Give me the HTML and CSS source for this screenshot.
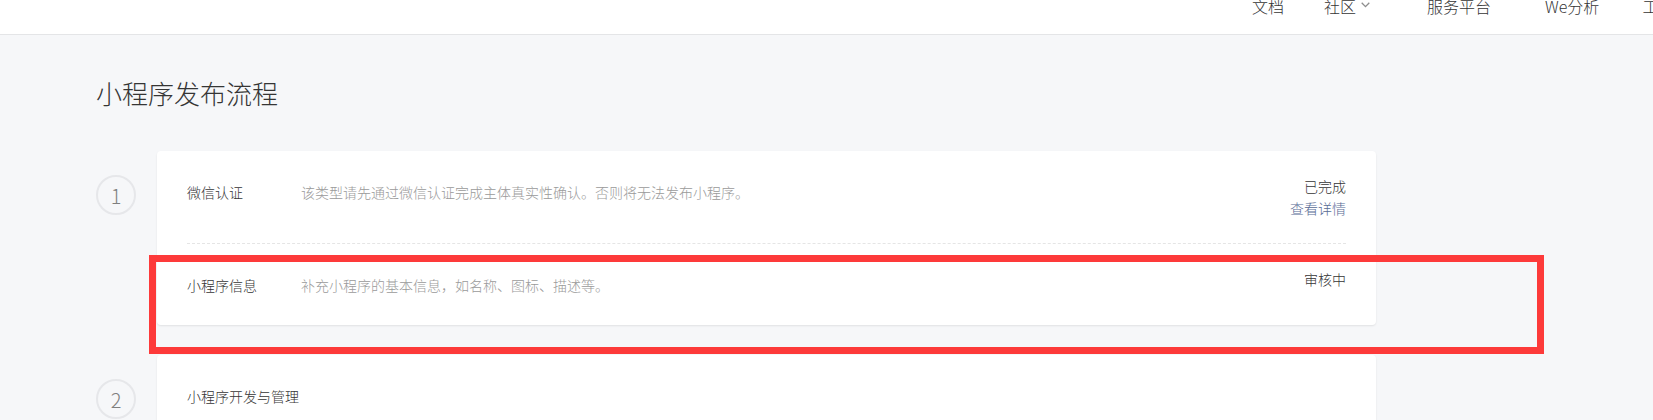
FILE: index.html
```html
<!DOCTYPE html>
<html lang="zh-CN">
<head>
<meta charset="utf-8">
<title>小程序发布流程</title>
<link rel="stylesheet" href="styles.css">
</head>
<body>
<header class="header">
  <nav class="nav">
    <a class="nav-item">文档</a>
    <a class="nav-item nav-item--community">社区<svg class="chev" width="9" height="6" viewBox="0 0 9 6"><polyline points="0.7,0.7 4.5,4.6 8.3,0.7" fill="none" stroke="#8e8e8e" stroke-width="1.3"/></svg></a>
    <a class="nav-item nav-item--service">服务平台</a>
    <a class="nav-item nav-item--we">We分析</a>
    <a class="nav-item nav-item--tool">工具</a>
  </nav>
</header>
<main class="main">
  <h1 class="title">小程序发布流程</h1>
  <div class="steps">
    <section class="step">
      <div class="step-num">1</div>
      <div class="card">
        <div class="row row--first">
          <div class="label">微信认证</div>
          <div class="desc">该类型请先通过微信认证完成主体真实性确认。否则将无法发布小程序。</div>
          <div class="status">
            <div>已完成</div>
            <a class="link">查看详情</a>
          </div>
        </div>
        <div class="row row--last">
          <div class="label">小程序信息</div>
          <div class="desc">补充小程序的基本信息，如名称、图标、描述等。</div>
          <div class="status">
            <div>审核中</div>
          </div>
        </div>
      </div>
    </section>
    <section class="step">
      <div class="step-num">2</div>
      <div class="card card--tall">
        <div class="row">
          <div class="label label--wide">小程序开发与管理</div>
        </div>
      </div>
    </section>
  </div>
</main>
<div class="highlight"></div>
</body>
</html>
```
FILE: styles.css
```css
* { box-sizing: border-box; }
html, body { margin: 0; padding: 0; }
body {
  background: #f6f7f9;
  font-family: "Noto Sans CJK SC", "Noto Sans", sans-serif;
  font-weight: 300;
  color: #353535;
  overflow: hidden;
  height: 420px;
}
.header {
  height: 35px;
  background: #fff;
  border-bottom: 1px solid #e4e5e7;
  overflow: hidden;
}
.nav {
  display: flex;
  margin-left: 1252px;
  margin-top: -2px;
  font-size: 16px;
  line-height: 16px;
  white-space: nowrap;
}
.nav-item { color: #353535; display: flex; align-items: flex-start; }
.nav-item--community { margin-left: 40px; }
.nav-item--service { margin-left: 57px; }
.nav-item--we { margin-left: 54px; }
.nav-item--tool { margin-left: 43px; }
.chev { margin-left: 5px; margin-top: 4px; }

.main {
  padding: 40px 0 0 96px;
  width: 1376px;
}
.title {
  margin: 0;
  font-size: 26px;
  line-height: 36px;
  font-weight: 300;
  color: #353535;
}
.steps {
  margin-top: 40px;
  display: flex;
  flex-direction: column;
  gap: 30px;
}
.step {
  display: flex;
  align-items: flex-start;
}
.step-num {
  flex: 0 0 40px;
  width: 40px;
  height: 40px;
  margin-top: 24px;
  border: 2px solid #e6e7ea;
  border-radius: 50%;
  display: flex;
  align-items: center;
  justify-content: center;
  font-size: 20px;
  color: #7f7f7f;
  font-weight: 300;
}
.card {
  flex: 1;
  margin-left: 21px;
  background: #fff;
  border-radius: 4px;
  box-shadow: 0 1px 2px rgba(0,0,0,0.09);
}
.card--tall { height: 200px; }
.row {
  display: flex;
  margin: 0 30px;
  padding: 24px 0 24px;
  font-size: 14px;
  line-height: 22px;
}
.row--first { border-bottom: 1px dashed #e5e5e5; }
.row--last { padding-bottom: 29px; }
.label {
  width: 114px;
  flex: 0 0 114px;
  padding-top: 6px;
  color: #353535;
}
.label--wide { width: auto; flex: none; }
.desc {
  flex: 1;
  padding-top: 6px;
  color: #9a9a9a;
}
.status {
  text-align: right;
  color: #353535;
}
.link {
  display: block;
  color: #576b95;
}
.highlight {
  position: absolute;
  left: 149px;
  top: 255px;
  width: 1395px;
  height: 99px;
  border: 7px solid #fd3a3a;
}
```
